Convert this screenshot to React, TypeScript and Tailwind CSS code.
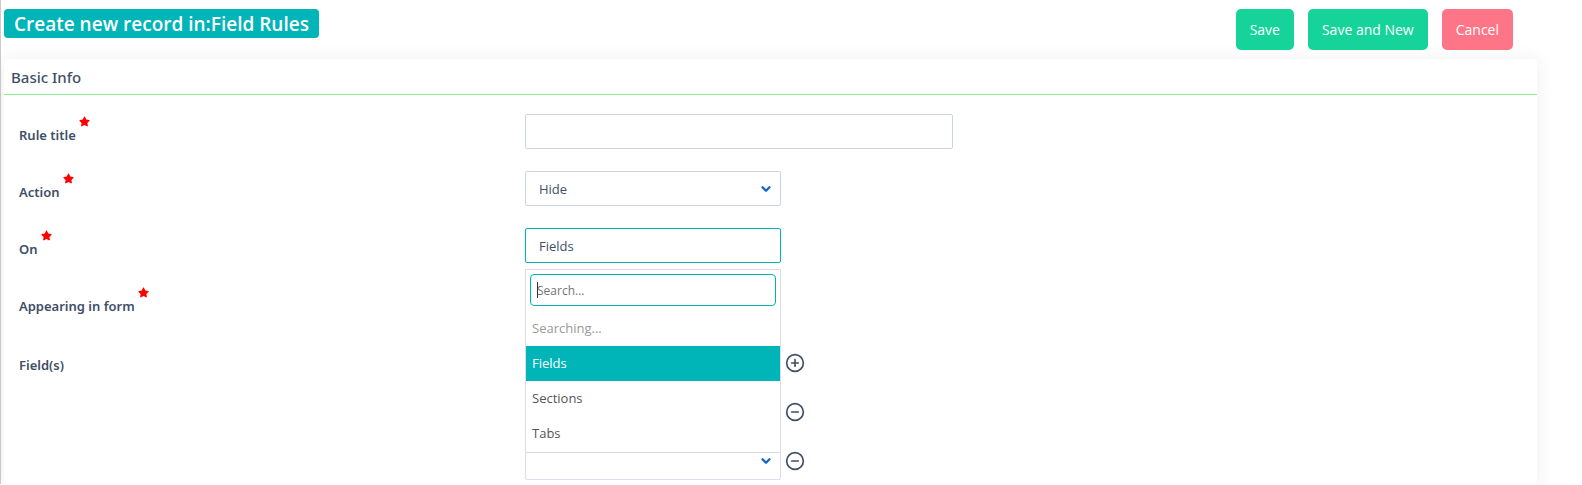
import React from 'react';
import { ChevronDown, CircleMinus, CirclePlus } from 'lucide-react';
import { FaStar } from 'react-icons/fa';

interface RowProps {
  id: string;
  label: string;
  required?: boolean;
  children: React.ReactNode;
}

const FormRow: React.FC<RowProps> = ({ id, label, required, children }) => (
  <div className="grid grid-cols-[1fr_2fr] items-start">
    <label htmlFor={id} className="flex items-start gap-[3px] pt-0.5 font-['Noto_Sans',sans-serif] font-semibold leading-5">
      <span className="pt-[9px]">{label}</span>
      {required && <FaStar className="text-[#ff0000]" size={11} />}
    </label>
    <div>{children}</div>
  </div>
);

interface SelectProps {
  id: string;
  label?: string;
  options: string[];
  open?: boolean;
  tall?: boolean;
}

const SelectBox: React.FC<SelectProps> = ({ id, label, options, open, tall }) => (
  <div className="relative w-64">
    <select
      id={id}
      aria-label={label}
      className={`block w-full appearance-none rounded-xs border bg-white pl-[13px] pr-8 pt-[3px] outline-none ${
        tall ? 'h-[38px]' : 'h-[35px]'
      } ${open ? 'border-[#00b5b8]' : tall ? 'border-[#d9dcf5]' : 'border-[#cad3e4]'}`}
    >
      {options.map((option) => (
        <option key={option}>{option}</option>
      ))}
    </select>
    {!open && (
      <ChevronDown
        className="pointer-events-none absolute right-2 top-1/2 -translate-y-1/2 text-[#1565c8]"
        size={14}
        strokeWidth={4}
      />
    )}
  </div>
);

const SearchMenu: React.FC = () => (
  <div className="absolute left-0 top-full z-10 mt-[6px] w-64 rounded-b-xs border border-[#d9dbe9] bg-white text-[#555]">
    <div className="relative p-1">
      <input
        type="text"
        aria-label="Search"
        placeholder="Search..."
        className="block h-8 w-full rounded-sm border border-[#00b5b8] px-[6px] text-xs outline-none placeholder:text-[#757575]"
      />
      <span className="absolute left-[11px] top-3 h-4 w-px bg-[#333]" />
    </div>
    <ul role="listbox" aria-label="On" className="py-px leading-[35px]">
      <li className="px-[6px] text-[#999]">Searching...</li>
      <li role="option" aria-selected="true" className="bg-[#00b5b8] px-[6px] text-white">Fields</li>
      <li role="option" aria-selected="false" className="px-[6px]">Sections</li>
      <li role="option" aria-selected="false" className="px-[6px]">Tabs</li>
    </ul>
  </div>
);

const App: React.FC = () => {
  return (
    <main className="border-l border-[#cccccc] bg-white pl-[3px] font-['Open_Sans','Noto_Sans',sans-serif] text-[13px] text-[#404e67]">
      <header className="flex items-start justify-between py-[9px] pr-[69px]">
        <h1 className="rounded-sm bg-[#00b5b8] px-[10px] pt-0.5 text-[19px] font-semibold leading-[27px] text-white">
          Create new record in:Field Rules
        </h1>
        <div className="flex gap-[14px] text-sm text-white">
          <button type="button" className="h-[41px] rounded-[5px] bg-[#16d39a] px-[14px]">Save</button>
          <button type="button" className="h-[41px] rounded-[5px] bg-[#16d39a] px-[14px]">Save and New</button>
          <button type="button" className="h-[41px] rounded-[5px] bg-[#ff7588] px-[14px]">Cancel</button>
        </div>
      </header>

      <section className="mr-[45px] rounded-sm bg-white pb-1 shadow-[0_2px_18px_1px_rgba(49,53,72,0.08)]">
        <h2 className="border-b border-[#90ee90] px-[7px] pt-px font-['Noto_Sans',sans-serif] text-[15px] font-medium leading-[34px]">
          Basic Info
        </h2>
        <form className="flex flex-col gap-[22px] pl-[15px] pt-[19px]">
          <FormRow id="title" label="Rule title" required>
            <input
              id="title"
              type="text"
              className="block h-[35px] w-[428px] rounded-xs border border-[#cad3e4] px-3 outline-none"
            />
          </FormRow>
          <FormRow id="action" label="Action" required>
            <SelectBox id="action" options={['Hide', 'Show']} />
          </FormRow>
          <FormRow id="on" label="On" required>
            <div className="relative">
              <SelectBox id="on" options={['Fields', 'Sections', 'Tabs']} open />
              <SearchMenu />
            </div>
          </FormRow>
          <FormRow id="form" label="Appearing in form" required>
            <SelectBox id="form" options={['']} />
          </FormRow>
          <div className="pt-0.5">
            <FormRow id="field-0" label="Field(s)">
              <div className="flex flex-col gap-[11px]">
                {[0, 1, 2].map((n) => (
                  <div key={n} className="flex items-center gap-1">
                    <SelectBox id={`field-${n}`} label={`Field ${n + 1}`} options={['']} tall />
                    <button type="button" aria-label={n === 0 ? 'Add field' : 'Remove field'}>
                      {n === 0 ? <CirclePlus size={20} /> : <CircleMinus size={20} />}
                    </button>
                  </div>
                ))}
              </div>
            </FormRow>
          </div>
        </form>
      </section>
    </main>
  );
};

export default App;
